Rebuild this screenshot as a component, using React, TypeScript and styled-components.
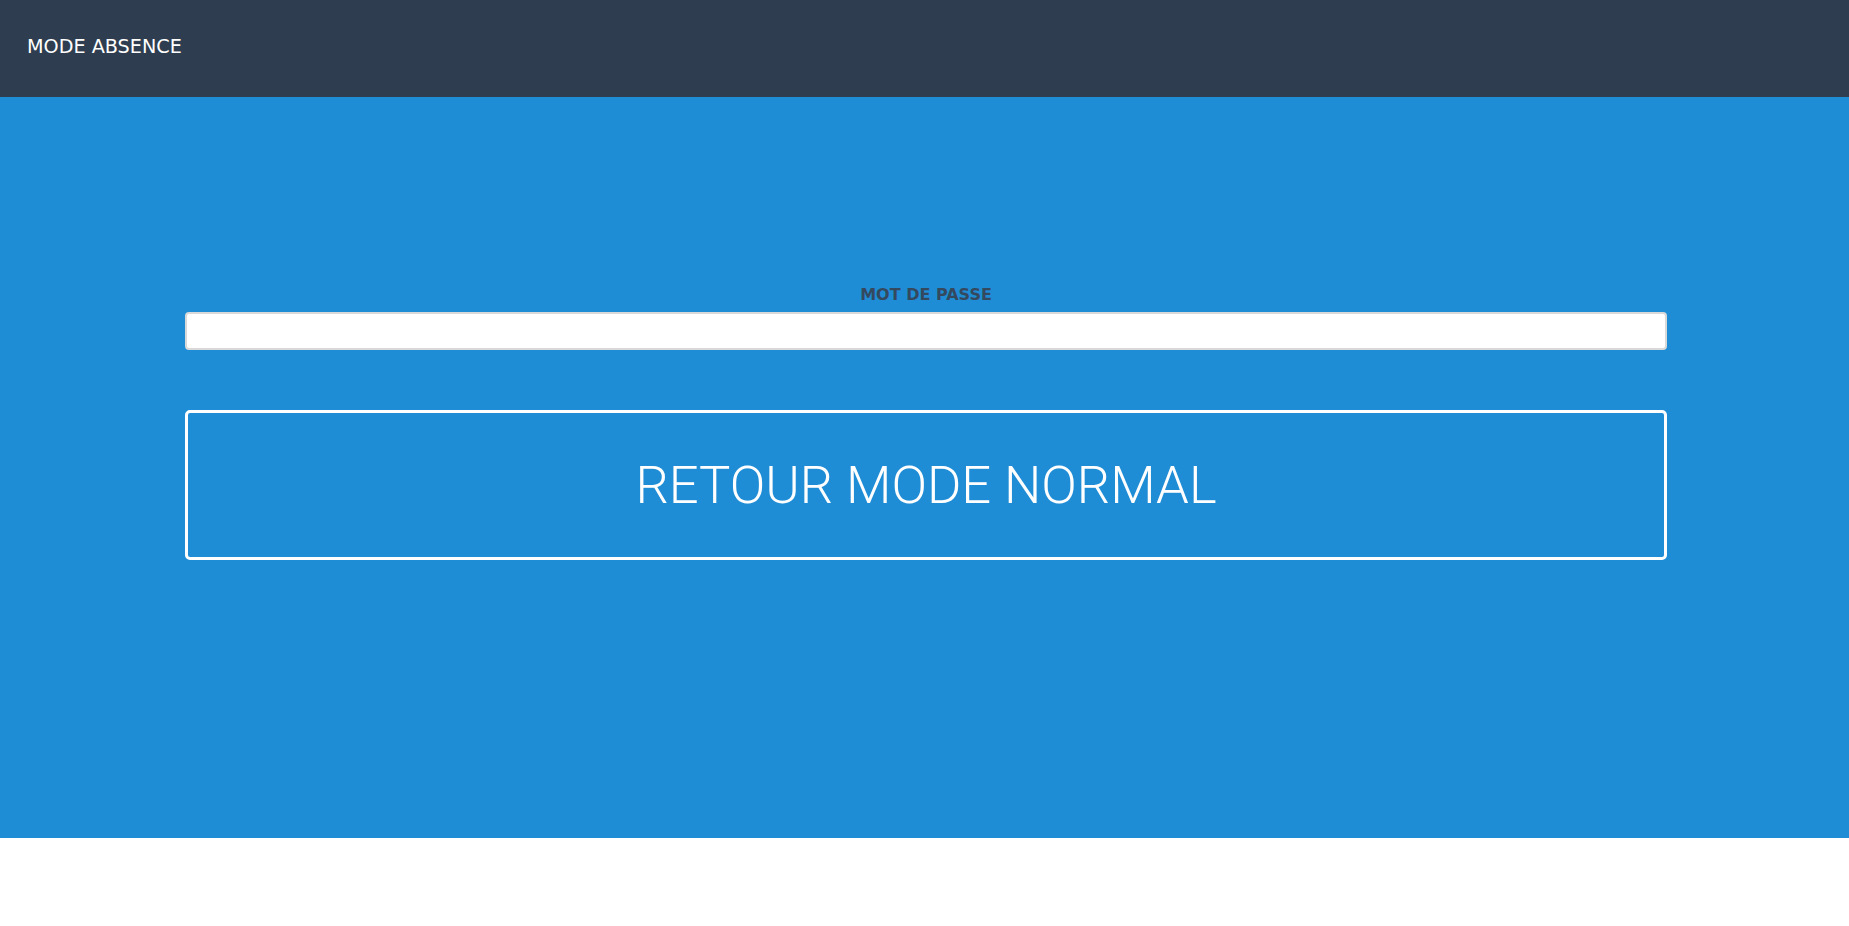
import React from "react";
import styled, { createGlobalStyle } from "styled-components";

const Global = createGlobalStyle`
  html, body { margin: 0; padding: 0; background: #ffffff; }
  body { font-family: "DejaVu Sans", sans-serif; }
  * { box-sizing: border-box; }
`;

const Header = styled.header`
  height: 97px;
  background: #2e3e50;
  display: flex;
  align-items: center;
  padding: 0 27px 4px;
`;

const Title = styled.div`
  color: #ffffff;
  font-family: "DejaVu Sans", sans-serif;
  font-size: 19.2px;
`;

const Main = styled.main`
  height: 741px;
  background: #1f8dd6;
  padding-top: 188px;
`;

const Form = styled.form`
  width: 1482px;
  margin-left: 185px;
  display: flex;
  flex-direction: column;
`;

const Label = styled.label`
  text-align: center;
  color: #34495e;
  font-family: "DejaVu Sans", sans-serif;
  font-weight: bold;
  font-size: 16px;
  margin-bottom: 8px;
`;

const Input = styled.input`
  height: 38px;
  border: 2px solid #d9d9d9;
  border-radius: 4px;
  background: #ffffff;
  padding: 0 10px;
  font-size: 16px;
  outline: none;
`;

const Button = styled.button`
  margin-top: 60px;
  height: 150px;
  background: transparent;
  border: 3px solid #ffffff;
  border-radius: 5px;
  color: #ffffff;
  font-family: Roboto, "Open Sans", sans-serif;
  font-weight: 300;
  font-size: 52.5px;
  cursor: pointer;
`;

export default function App() {
  return (
    <>
      <Global />
      <Header>
        <Title>MODE ABSENCE</Title>
      </Header>
      <Main>
        <Form onSubmit={(e) => e.preventDefault()}>
          <Label htmlFor="pwd">MOT DE PASSE</Label>
          <Input id="pwd" type="password" />
          <Button type="submit">RETOUR MODE NORMAL</Button>
        </Form>
      </Main>
    </>
  );
}
